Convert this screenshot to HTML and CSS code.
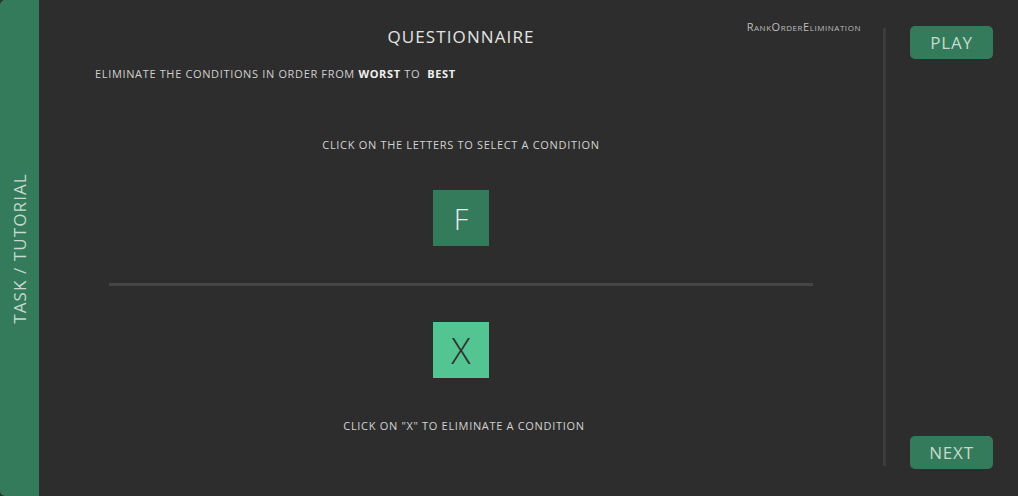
FILE: index.html
```html
<!DOCTYPE html>
<html>
<head>
<meta charset="utf-8">
<link rel="stylesheet" href="styles.css">
</head>
<body>
<div class="app">
  <aside class="sidebar"><span class="side-label">TASK / TUTORIAL</span></aside>
  <main class="main">
    <header class="header">
      <div></div>
      <h1 class="title">QUESTIONNAIRE</h1>
      <div class="tag">RankOrderElimination</div>
    </header>
    <p class="instr">ELIMINATE THE CONDITIONS IN ORDER FROM <b>WORST</b> TO&nbsp; <b>BEST</b></p>
    <p class="hint hint-top">CLICK ON THE LETTERS TO SELECT A CONDITION</p>
    <div class="tile tile-letter">F</div>
    <div class="divider"></div>
    <div class="tile tile-x">X</div>
    <p class="hint hint-bottom">CLICK ON "X" TO ELIMINATE A CONDITION</p>
  </main>
  <div class="vsep"></div>
  <nav class="side-right">
    <button class="btn">PLAY</button>
    <button class="btn">NEXT</button>
  </nav>
</div>
</body>
</html>
```
FILE: styles.css
```css
* { box-sizing: border-box; }
html, body { margin: 0; padding: 0; }
body {
  background: #2d2d2d;
  font-family: "Open Sans", "Liberation Sans", sans-serif;
  width: 1018px;
  height: 496px;
  overflow: hidden;
}
.app {
  display: flex;
  height: 496px;
}
.sidebar {
  width: 39px;
  flex: none;
  background: #337b5b;
  border-radius: 5px 0 0 5px;
  display: flex;
  align-items: center;
  justify-content: center;
}
.side-label {
  transform: rotate(-90deg);
  white-space: nowrap;
  color: #c5d9ce;
  font-size: 17px;
  letter-spacing: 1.1px;
  font-family: "Open Sans", sans-serif;
}
.main {
  flex: 1;
  display: flex;
  flex-direction: column;
  align-items: center;
}
.header {
  width: 100%;
  display: grid;
  grid-template-columns: 1fr auto 1fr;
  align-items: start;
  padding-top: 25px;
  height: 55px;
}
.title {
  margin: 0;
  font-weight: 400;
  font-size: 17px;
  line-height: 24px;
  color: #e4e4e4;
  letter-spacing: 1.1px;
}
.tag {
  justify-self: end;
  margin-right: 22px;
  margin-top: -6px;
  font-size: 11px;
  font-variant: small-caps;
  color: #bdbdbd;
  letter-spacing: 0.55px;
}
.instr {
  align-self: flex-start;
  margin: 11px 0 0 56px;
  font-size: 11px;
  line-height: 16px;
  color: #d0d0d0;
  letter-spacing: 0.65px;
}
.instr b { color: #f0f0f0; font-weight: 700; }
.hint {
  margin: 0;
  font-size: 11px;
  line-height: 16px;
  color: #d3d3d3;
  letter-spacing: 0.68px;
}
.hint-top { margin-top: 55px; }
.tile {
  width: 56px;
  height: 56px;
  display: flex;
  align-items: center;
  justify-content: center;
  font-size: 29px;
  font-weight: 300;
}
.tile-letter {
  margin-top: 37px;
  background: #337b5b;
  color: #ececec;
}
.divider {
  margin-top: 37px;
  width: 704px;
  height: 3px;
  background: #454545;
}
.tile-x {
  margin-top: 36px;
  background: #52c592;
  color: #2f2f2f;
  font-size: 36px;
}
.hint-bottom { margin-top: 40px; margin-left: 6px; }
.vsep {
  width: 3px;
  flex: none;
  margin: 28px 0 30px 0;
  background: #3c3c3c;
}
.side-right {
  width: 132px;
  flex: none;
  display: flex;
  flex-direction: column;
  justify-content: space-between;
  padding: 26px 0 27px 24px;
}
.btn {
  width: 83px;
  height: 33px;
  border: none;
  border-radius: 5px;
  background: #337b5b;
  color: #c5d9ce;
  font-family: "Open Sans", sans-serif;
  font-size: 17px;
  letter-spacing: 0.8px;
  padding: 0;
  cursor: pointer;
}
```
